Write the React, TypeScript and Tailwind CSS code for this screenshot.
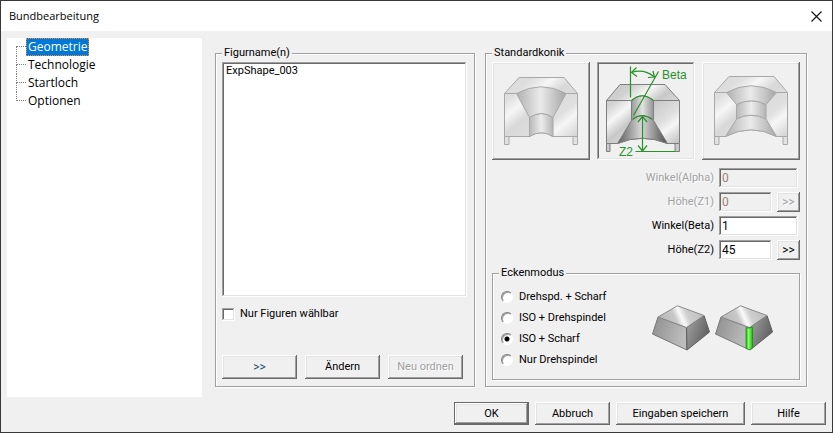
import { useState } from "react";
import type { ReactNode } from "react";

const raised =
  "shadow-[inset_-1px_-1px_0_#696969,inset_1px_1px_0_#fff,inset_-2px_-2px_0_#a0a0a0,inset_2px_2px_0_#e3e3e3]";
const sunken =
  "shadow-[inset_-1px_-1px_0_#fff,inset_1px_1px_0_#a0a0a0,inset_-2px_-2px_0_#e3e3e3,inset_2px_2px_0_#696969]";
const group = "border border-[#a0a0a0] shadow-[1px_1px_0_#fff,inset_1px_1px_0_#fff]";
const disabledText = "text-[#a0a0a0] [text-shadow:1px_1px_0_#fff]";

function PushButton({ children, className = "", disabled = false }: { children: ReactNode; className?: string; disabled?: boolean }) {
  return (
    <button
      type="button"
      disabled={disabled}
      className={`${raised} flex items-center justify-center bg-[#f0f0f0] whitespace-nowrap ${disabled ? disabledText : ""} ${className}`}
    >
      {children}
    </button>
  );
}

function Field({ id, label, value, disabled = false, more = false }: { id: string; label: string; value: string; disabled?: boolean; more?: boolean }) {
  return (
    <div className="flex h-5 items-center justify-end">
      <label htmlFor={id} className={`pr-[5px] ${disabled ? disabledText : ""}`}>
        {label}
      </label>
      <div className="flex w-[81px] gap-[5px]">
        <input
          id={id}
          type="text"
          defaultValue={value}
          disabled={disabled}
          className={`${sunken} h-5 min-w-0 px-[3px] text-[12px] ${more ? "w-[53px]" : "w-[79px]"} ${disabled ? "bg-[#f0f0f0] text-[#a08078]" : "bg-white"}`}
        />
        {more && (
          <PushButton className="h-5 w-[23px] text-[12px]" disabled={disabled}>
            &gt;&gt;
          </PushButton>
        )}
      </div>
    </div>
  );
}

function Gradients({ id, dark = false }: { id: string; dark?: boolean }) {
  return (
    <defs>
      <linearGradient id={`${id}-body`} x1="0" y1="0" x2="1" y2="1">
        <stop offset="0" stopColor={dark ? "#c4c4c4" : "#dadada"} />
        <stop offset="0.2" stopColor={dark ? "#d2d2d2" : "#dedede"} />
        <stop offset="0.34" stopColor="#f6f6f6" />
        <stop offset="0.48" stopColor={dark ? "#c8c8c8" : "#d8d8d8"} />
        <stop offset="0.7" stopColor="#e0e0e0" />
        <stop offset="0.8" stopColor="#f6f6f6" />
        <stop offset="1" stopColor={dark ? "#bcbcbc" : "#d2d2d2"} />
      </linearGradient>
      <linearGradient id={`${id}-hole`} x1="0" y1="0" x2="1" y2="0">
        <stop offset="0" stopColor={dark ? "#9a9a9a" : "#b8b8b8"} />
        <stop offset="0.5" stopColor={dark ? "#e2e2e2" : "#ececec"} />
        <stop offset="1" stopColor={dark ? "#949494" : "#b4b4b4"} />
      </linearGradient>
      <linearGradient id={`${id}-flare`} x1="0" y1="0" x2="1" y2="0">
        <stop offset="0" stopColor={dark ? "#5e5e5e" : "#b0b0b0"} />
        <stop offset="0.48" stopColor={dark ? "#d8d8d8" : "#ebebeb"} />
        <stop offset="1" stopColor={dark ? "#4c4c4c" : "#a6a6a6"} />
      </linearGradient>
    </defs>
  );
}

function ConeTop() {
  return (
    <svg viewBox="0 0 98 98" className="size-full" aria-hidden="true">
      <Gradients id="ct" />
      <g stroke="#a8a8a8" strokeWidth="1">
        <path d="M12.500 31.500L27 15.500H72L85.500 31.500V74.500H61Q49 67 37.500 74.500H12.500Z" fill="url(#ct-body)" />
        <path d="M12.500 31.500H25M74 31.500H85.500" fill="none" />
        <path d="M12.500 74.500h4.500v8h-4.500zM81 74.500h4.500v8H81z" fill="#e2e2e2" />
        <path d="M37.500 55.500Q49 47.500 61 55.500V74.500Q49 67 37.500 74.500Z" fill="url(#ct-hole)" />
        <path d="M24.500 31.500Q49 18 74 31.500L61 55.500Q49 47.500 37.500 55.500Z" fill="url(#ct-flare)" />
      </g>
    </svg>
  );
}

function ConeBottom() {
  return (
    <svg viewBox="0 0 98 98" className="size-full" aria-hidden="true">
      <Gradients id="cb" dark />
      <g stroke="#7e7e7e" strokeWidth="1">
        <path d="M9.500 38.500L23 22.500H68L82.500 38.500V81.500H70.500Q45 71 20.500 81.500H9.500Z" fill="url(#cb-body)" />
        <path d="M9.500 38.500H34M56 38.500H82" fill="none" />
        <path d="M9.500 81.500h3.500v8H9.500zM78 81.500h4.500v8H78z" fill="#c8c8c8" />
        <path d="M34.500 38.500Q45 29 56.500 38.500V58.500Q45 49 34.500 58.500Z" fill="url(#cb-hole)" />
        <path d="M34.500 58.500Q45 49 56.500 58.500L70.500 81.500Q45 71 20.500 81.500Z" fill="url(#cb-flare)" />
      </g>
      <g stroke="#279327" strokeWidth="1.200" fill="none">
        <path d="M33.500 4.500V35.500M61.500 9.500L36.500 53.500" />
        <path d="M34.500 10.500Q47 6.500 57.500 15" />
        <path d="M39.500 5.500L34.500 10.500L40 14.500M56 9L57.500 15L51 15.500" />
        <path d="M34.500 38.500Q45 29 56.500 38.500M36 57Q45 50 55 57" />
        <path d="M45.500 54.500V89M41 60L45.500 54.500L50 60M41 83.500L45.500 89L50 83.500M38.500 89.500H78" />
      </g>
      <g fill="#279327" fontSize="12" fontFamily="Liberation Sans, Arial, sans-serif">
        <text x="65" y="17">Beta</text>
        <text x="22" y="94">Z2</text>
      </g>
    </svg>
  );
}

function ConeDouble() {
  return (
    <svg viewBox="0 0 98 98" className="size-full" aria-hidden="true">
      <Gradients id="cd" />
      <g stroke="#a8a8a8" strokeWidth="1">
        <path d="M12.500 30.500L27 14.500H72L85.500 30.500V74.500H74.500Q49 61 23.500 74.500H12.500Z" fill="url(#cd-body)" />
        <path d="M12.500 30.500H25M74 30.500H85.500" fill="none" />
        <path d="M12.500 74.500h4.500v8h-4.500zM81 74.500h4.500v8H81z" fill="#e2e2e2" />
        <path d="M34.500 42.500Q49 35 64 42.500V57Q49 49.500 34.500 57Z" fill="url(#cd-hole)" />
        <path d="M24.500 30.500Q49 17 74.500 30.500L64 42.500Q49 35 34.500 42.500Z" fill="url(#cd-flare)" />
        <path d="M34.500 57Q49 49.500 64 57L74.500 74.500Q49 61 23.500 74.500Z" fill="url(#cd-flare)" />
      </g>
    </svg>
  );
}

function Frustum({ id, edge = false }: { id: string; edge?: boolean }) {
  return (
    <svg viewBox="0 0 58 46" className="h-[46px] w-[58px]" aria-hidden="true">
      <defs>
        <linearGradient id={`${id}-top`} gradientUnits="userSpaceOnUse" x1="12" y1="18" x2="44" y2="4">
          <stop offset="0" stopColor="#bababa" />
          <stop offset="0.35" stopColor="#c8c8c8" />
          <stop offset="0.52" stopColor="#fafafa" />
          <stop offset="0.7" stopColor="#cfcfcf" />
          <stop offset="1" stopColor="#c2c2c2" />
        </linearGradient>
        <linearGradient id={`${id}-left`} x1="0" y1="0" x2="1" y2="0.300">
          <stop offset="0" stopColor="#8e8e8e" />
          <stop offset="1" stopColor="#bdbdbd" />
        </linearGradient>
        <linearGradient id={`${id}-right`} x1="0" y1="0" x2="1" y2="0.500">
          <stop offset="0" stopColor="#a4a4a4" />
          <stop offset="1" stopColor="#606060" />
        </linearGradient>
        <linearGradient id={`${id}-edge`} x1="0" y1="0" x2="1" y2="0">
          <stop offset="0" stopColor="#1fae10" />
          <stop offset="0.4" stopColor="#8dff70" />
          <stop offset="1" stopColor="#18b80c" />
        </linearGradient>
      </defs>
      <path d="M6 12L34.500 22.500L35 45L0.500 29Z" fill={`url(#${id}-left)`} stroke="#777" />
      <path d="M34.500 22.500L52 10.500L57.500 27L35 45Z" fill={`url(#${id}-right)`} stroke="#5c5c5c" />
      <path d="M6 12L25.500 0.800L52 10.500L34.500 22.500Z" fill={`url(#${id}-top)`} stroke="#8a8a8a" />
      {edge && (
        <path d="M31 22.500Q34 24 37.500 22V43Q34.500 46 31 43.500Z" fill={`url(#${id}-edge)`} stroke="#1c8f12" strokeWidth="0.800" />
      )}
    </svg>
  );
}

const pages = ["Geometrie", "Technologie", "Startloch", "Optionen"];
const modes = ["Drehspd. + Scharf", "ISO + Drehspindel", "ISO + Scharf", "Nur Drehspindel"];

export default function App() {
  const [page, setPage] = useState(0);
  const [mode, setMode] = useState(2);
  const [cone, setCone] = useState(1);
  const cones = [
    { name: "Konik oben", art: <ConeTop /> },
    { name: "Konik unten", art: <ConeBottom /> },
    { name: "Konik beidseitig", art: <ConeDouble /> },
  ];

  return (
    <div className="flex min-h-screen flex-col border border-[#3a3739] bg-[#f0f0f0] font-['Roboto','Liberation_Sans',sans-serif] text-[11px] leading-[14px] text-black">
      <header className="flex h-[30px] items-center justify-between bg-white pr-[10px] pl-2 font-['Open_Sans','Noto_Sans',sans-serif]">
        <h1>Bundbearbeitung</h1>
        <button type="button" aria-label="Schließen">
          <svg viewBox="0 0 11 11" className="size-[11px]" aria-hidden="true">
            <path d="M0.500 0.500L10.500 10.500M10.500 0.500L0.500 10.500" stroke="#111" strokeWidth="1.100" />
          </svg>
        </button>
      </header>

      <main className="flex grow pt-[7px] pl-[6px]">
        <nav className="w-[195px] shrink-0 bg-white font-['Open_Sans','Noto_Sans',sans-serif] text-[12px] leading-[18px]">
          <ul className="pl-[9px]">
            {pages.map((name, i) => (
              <li key={name} className="flex h-[18px]">
                <span aria-hidden="true" className="flex w-[10px] flex-col">
                  <span className={`h-[9px] border-b border-dotted border-b-[#808080] ${i > 0 ? "border-l border-l-[#808080]" : ""}`} />
                  <span className={`h-[9px] ${i < pages.length - 1 ? "border-l border-dotted border-[#808080]" : ""}`} />
                </span>
                <button
                  type="button"
                  onClick={() => setPage(i)}
                  className={`px-[2px] ${page === i ? "bg-[#0078d7] text-white outline outline-1 -outline-offset-1 outline-dotted outline-[#ff8728]" : ""}`}
                >
                  {name}
                </button>
              </li>
            ))}
          </ul>
        </nav>

        <fieldset className={`${group} mt-2 mb-[10px] ml-[13px] flex w-[260px] shrink-0 flex-col pt-[2px] pr-[7px] pb-[7px] pl-[6px]`}>
          <legend className="bg-[#f0f0f0] px-[2px]">Figurname(n)</legend>
          <select size={4} aria-label="Figurname(n)" className={`${sunken} min-h-[235px] grow overflow-hidden bg-white p-[2px]`}>
            <option className="px-[2px] py-0">ExpShape_003</option>
          </select>
          <label className="mt-[10px] flex items-center gap-[5px]">
            <input type="checkbox" className={`${sunken} size-[13px] appearance-none bg-white`} />
            Nur Figuren wählbar
          </label>
          <div className="mt-[34px] flex gap-2">
            <PushButton className="h-6 w-[75px] text-[12px] text-[#24506f]">&gt;&gt;</PushButton>
            <PushButton className="h-6 w-[75px]">Ändern</PushButton>
            <PushButton className="h-6 w-[75px]" disabled>
              Neu ordnen
            </PushButton>
          </div>
        </fieldset>

        <fieldset className={`${group} mt-2 mr-[25px] mb-[10px] ml-[10px] min-w-0 grow pt-[2px] pr-[6px] pb-[6px] pl-[6px]`}>
          <legend className="bg-[#f0f0f0] px-[2px]">Standardkonik</legend>
          <div className="flex justify-between">
            {cones.map((c, i) => (
              <button
                key={c.name}
                type="button"
                aria-label={c.name}
                aria-pressed={cone === i}
                onClick={() => setCone(i)}
                className={`size-[98px] ${cone === i ? sunken : raised}`}
              >
                {c.art}
              </button>
            ))}
          </div>
          <div className="mt-2 flex flex-col gap-1">
            <Field id="alpha" label="Winkel(Alpha)" value="0" disabled />
            <Field id="z1" label="Höhe(Z1)" value="0" disabled more />
            <Field id="beta" label="Winkel(Beta)" value="1" />
            <Field id="z2" label="Höhe(Z2)" value="45" more />
          </div>
          <fieldset className={`${group} mt-[6px] flex items-center pt-[6px] pb-[9px] pl-2`}>
            <legend className="ml-[-2px] bg-[#f0f0f0] px-[2px]">Eckenmodus</legend>
            <div className="grow">
              {modes.map((name, i) => (
                <label key={name} className="flex h-[21px] items-center gap-[6px]">
                  <input
                    type="radio"
                    name="mode"
                    checked={mode === i}
                    onChange={() => setMode(i)}
                    className="size-3 appearance-none rounded-full border border-t-[#808080] border-r-white border-b-white border-l-[#808080] bg-white shadow-[inset_1px_1px_0_#a0a0a0] checked:bg-[radial-gradient(circle,#000_2px,#fff_3px)]"
                  />
                  {name}
                </label>
              ))}
            </div>
            <div className="flex gap-[5px] pr-[26px]">
              <Frustum id="f1" />
              <Frustum id="f2" edge />
            </div>
          </fieldset>
        </fieldset>
      </main>

      <footer className="flex justify-end gap-[6px] pt-[5px] pr-[6px] pb-[7px]">
        <div className="bg-[#696969] p-px">
          <PushButton className="h-[21px] w-[73px]">OK</PushButton>
        </div>
        <PushButton className="h-[23px] w-[75px]">Abbruch</PushButton>
        <PushButton className="h-[23px] w-[129px]">Eingaben speichern</PushButton>
        <PushButton className="h-[23px] w-[75px]">Hilfe</PushButton>
      </footer>
    </div>
  );
}
